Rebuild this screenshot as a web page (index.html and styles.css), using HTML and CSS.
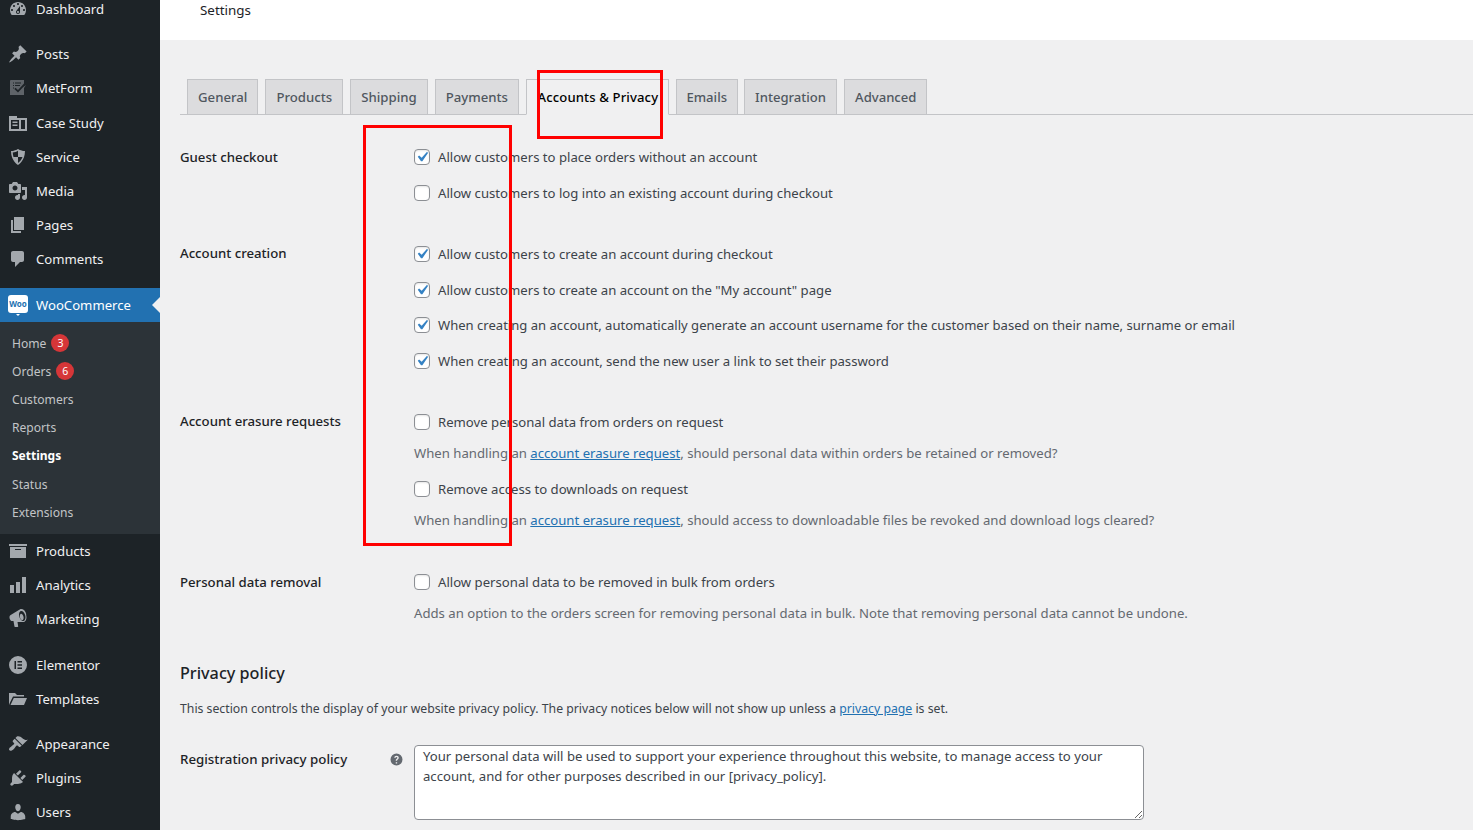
FILE: index.html
```html
<!DOCTYPE html>
<html lang="en">
<head>
<meta charset="utf-8">
<title>Settings</title>
<link rel="stylesheet" href="styles.css">
</head>
<body>
<div class="page">
<nav class="sidebar">
  <div class="group group-first">
    <a class="item"><svg class="ico" viewBox="0 0 20 20"><path d="M3.76 16h12.48c1.1-1.37 1.76-3.11 1.76-5 0-4.42-3.58-8-8-8s-8 3.58-8 8c0 1.89.66 3.63 1.76 5zM10 4c.55 0 1 .45 1 1s-.45 1-1 1-1-.45-1-1 .45-1 1-1zM6 6c.55 0 1 .45 1 1s-.45 1-1 1-1-.45-1-1 .45-1 1-1zm8 0c.55 0 1 .45 1 1s-.45 1-1 1-1-.45-1-1 .45-1 1-1zm-5.37 5.55L12 7v6c0 1.1-.9 2-2 2s-2-.9-2-2c0-.57.24-1.08.63-1.45zM4 10c.55 0 1 .45 1 1s-.45 1-1 1-1-.45-1-1 .45-1 1-1zm12 0c.55 0 1 .45 1 1s-.45 1-1 1-1-.45-1-1 .45-1 1-1zm-5 3c0-.55-.45-1-1-1s-1 .45-1 1 .45 1 1 1 1-.45 1-1z"/></svg>Dashboard</a>
  </div>
  <div class="group group-posts">
    <a class="item"><svg class="ico" viewBox="0 0 20 20"><path d="M10.44 3.02l1.82-1.82 6.36 6.35-1.83 1.82c-1.05-.68-2.48-.57-3.41.36l-.75.75c-.92.93-1.04 2.35-.35 3.41l-1.83 1.82-2.41-2.41-2.8 2.79c-.42.42-3.38 2.71-3.8 2.29s1.86-3.39 2.28-3.81l2.79-2.79L4.1 9.36l1.83-1.82c1.05.69 2.48.57 3.41-.36l.75-.75c.93-.92 1.04-2.35.35-3.41z"/></svg>Posts</a>
    <a class="item"><svg class="ico ico-dim" viewBox="0 0 20 20"><path fill-rule="evenodd" d="M3 2h13v3.500L10 12 7.500 9.800l-1.200 1.200L10 14.500l5-5.200L18 7l-2 3v7H2V3c0-.5.500-1 1-1zM5 4.500v1h1v-1zm2 0v1h6v-1zM5 7v1h1V7zm2 0v1h5V7zM5 9.500v1h1v-1z"/></svg>MetForm</a>
    <a class="item"><svg class="ico" viewBox="0 0 20 20"><path fill-rule="evenodd" d="M1 3h8v2h10v13H1zM3 7v9h8V7zm10 0v9h4V7zM4.500 8.500h5v1.500h-5zm0 3h5v1.500h-5z"/></svg>Case Study</a>
    <a class="item"><svg class="ico" viewBox="0 0 20 20"><path fill-rule="evenodd" d="M10 2s3 2 7 2c0 10-7 14-7 14S3 14 3 4c4 0 7-2 7-2zm0 1.800C8.500 4.800 6.500 5.400 4.700 5.600c.1 1.600.4 3.100.8 4.400H10zM10 10v6c1.500-1 3.500-3 4.500-6H10z"/></svg>Service</a>
    <a class="item"><svg class="ico" viewBox="0 0 20 20"><path d="M13 11V4c0-.55-.45-1-1-1h-1.670L9 1H5L3.670 3H2c-.55 0-1 .45-1 1v7c0 .55.45 1 1 1h10c.55 0 1-.45 1-1zM7 4.500c1.380 0 2.500 1.120 2.500 2.500S8.380 9.500 7 9.500 4.500 8.380 4.500 7 5.620 4.500 7 4.500zM14 6h5v10.500c0 1.380-1.120 2.500-2.500 2.500S14 17.880 14 16.500s1.120-2.500 2.500-2.500c.17 0 .34.02.5.05V9h-3V6zm-4 8.050V13h2v3.500c0 1.380-1.120 2.500-2.500 2.500S7 17.880 7 16.500 8.120 14 9.500 14c.17 0 .34.02.5.05z"/></svg>Media</a>
    <a class="item"><svg class="ico" viewBox="0 0 20 20"><path d="M6 15V2h10v13H6zm-1 1h8v2H3V5h2v11z"/></svg>Pages</a>
    <a class="item"><svg class="ico" viewBox="0 0 20 20"><path d="M5 2h9c1.100 0 2 .9 2 2v7c0 1.100-.9 2-2 2h-2l-5 5v-5H5c-1.100 0-2-.9-2-2V4c0-1.100.9-2 2-2z"/></svg>Comments</a>
  </div>
  <div class="group group-woo">
    <a class="item item-current">
      <span class="woo-logo">Woo</span>WooCommerce
    </a>
    <div class="submenu">
      <a class="sub">Home <span class="badge">3</span></a>
      <a class="sub">Orders <span class="badge">6</span></a>
      <a class="sub">Customers</a>
      <a class="sub">Reports</a>
      <a class="sub sub-active">Settings</a>
      <a class="sub">Status</a>
      <a class="sub">Extensions</a>
    </div>
    <a class="item"><svg class="ico" viewBox="0 0 20 20"><path d="M19 3v2H1V3h18zM2 6h16v11H2V6zm11 3V8H7v1h6z"/></svg>Products</a>
    <a class="item"><svg class="ico" viewBox="0 0 20 20"><path d="M18 18V2h-4v16h4zm-6 0V7H8v11h4zm-6 0v-8H2v8h4z"/></svg>Analytics</a>
    <a class="item"><svg class="ico" viewBox="0 0 20 20"><path d="M18.150 5.940c.46 1.620.38 3.220-.02 4.480-.42 1.280-1.260 2.180-2.300 2.480-.16.06-.26.06-.4.06-.06.02-.12.02-.18.02-.06.02-.14.02-.22.02H9.500l.7 4.500c.02.14-.06.26-.14.34-.08.1-.24.16-.34.16H6.950c-.1 0-.26-.06-.34-.16-.08-.08-.16-.2-.14-.34l-1-5.500H4.250c-.5.06-1.080-.18-1.540-.62s-.88-1.080-1.060-1.880c-.24-.8-.2-1.560-.02-2.200.18-.62.58-1.080 1.060-1.300l9.020-5.420c.1-.06.18-.1.24-.16.06-.04.14-.08.24-.12.16-.08.28-.12.5-.18 1.040-.3 2.240.1 3.220.98.98.86 1.840 2.260 2.260 3.860zm-2.580 5.980c.4-.1.740-.34 1.040-.7.58-.7.860-1.760.860-3.040-.02-.64-.1-1.300-.28-1.980-.34-1.360-1.020-2.500-1.780-3.240s-1.680-1.100-2.460-.88c-.82.22-1.400.96-1.700 2-.32 1.040-.28 2.360.06 3.720.38 1.360 1 2.500 1.800 3.240.78.740 1.620 1.100 2.460.88zm-2.540-7.080c.22-.04.42-.02.62.04.38.16.76.48 1.100 1s.58 1.140.74 1.840c.16.68.16 1.340.08 1.900-.1.54-.34 1.020-.7 1.260-.12.08-.28.12-.44.16-.2.04-.42.02-.62-.04-.38-.16-.76-.48-1.100-1s-.58-1.140-.74-1.840c-.16-.68-.16-1.340-.08-1.900.1-.54.34-1.020.7-1.260.12-.08.28-.14.44-.16z"/></svg>Marketing</a>
  </div>
  <div class="group group-tight">
    <a class="item"><svg class="ico" viewBox="0 0 20 20"><path fill-rule="evenodd" d="M10 1a9 9 0 1 1 0 18 9 9 0 0 1 0-18zM6.500 6v8H8V6zm3 0v1.500H14V6zm0 3.250v1.500H14v-1.500zm0 3.250V14H14v-1.500z"/></svg>Elementor</a>
    <a class="item"><svg class="ico" viewBox="0 0 20 20"><path d="M1 4h6l2 2h7v1.500H5L2 13.500 1 16zM5.800 9H19l-3 7H2.500z"/></svg>Templates</a>
  </div>
  <div class="group">
    <a class="item"><svg class="ico" viewBox="0 0 20 20"><path d="M14.480 11.060L7.410 3.990l1.500-1.500c.5-.56 2.300-.47 3.510.32 1.210.8 1.430 1.280 2.910 2.100 1.180.64 2.450 1.260 4.450.85zm-.71.71L6.700 4.700 4.930 6.470c-.39.39-.39 1.020 0 1.410l1.060 1.060c.39.39.39 1.030 0 1.420-.6.6-1.430 1.110-2.210 1.690-.35.26-.7.53-1.010.84C1.430 13.230.4 15.330 1.400 16.300c.98 1 3.090-.03 4.430-1.370.31-.31.58-.66.85-1.020.57-.78 1.080-1.600 1.690-2.210.39-.39 1.020-.39 1.410 0l1.060 1.060c.39.39 1.020.39 1.410 0z"/></svg>Appearance</a>
    <a class="item"><svg class="ico" viewBox="0 0 20 20"><path d="M13.110 4.360L9.870 7.600 8 5.730l3.240-3.240c.35-.34 1.050-.2 1.560.32.52.51.66 1.210.31 1.550zm-8 1.770l.91-1.120 9.010 9.010-1.190.84c-.71.71-2.630 1.160-3.820 1.160H6.140L4.900 17.260c-.59.59-1.540.59-2.120 0-.59-.58-.59-1.530 0-2.120l1.240-1.240v-3.880c0-1.130.4-3.190 1.090-3.890zm7.260 3.970l3.240-3.240c.34-.35 1.040-.21 1.550.31.52.51.66 1.210.31 1.550l-3.240 3.250z"/></svg>Plugins</a>
    <a class="item"><svg class="ico" viewBox="0 0 20 20"><path d="M10 9.250c-2.270 0-2.730-3.440-2.730-3.440C7 4.020 7.820 2 9.970 2c2.160 0 2.980 2.020 2.710 3.810 0 0-.41 3.440-2.680 3.440zm0 2.570L12.720 10c2.390 0 4.520 2.330 4.520 4.530v2.490s-3.650 1.130-7.240 1.130c-3.650 0-7.240-1.130-7.240-1.130v-2.490c0-2.250 1.940-4.480 4.470-4.480z"/></svg>Users</a>
  </div>
</nav>
<main class="main">
  <header class="topbar"><span>Settings</span></header>
  <div class="wrap">
    <div class="tabs">
      <a class="tab">General</a>
      <a class="tab">Products</a>
      <a class="tab">Shipping</a>
      <a class="tab">Payments</a>
      <a class="tab tab-active">Accounts &amp; Privacy</a>
      <a class="tab">Emails</a>
      <a class="tab">Integration</a>
      <a class="tab">Advanced</a>
    </div>
    <div class="form">
      <section class="row">
        <div class="label">Guest checkout</div>
        <div class="field">
          <label class="opt"><span class="cb"><svg class="tick" viewBox="0 0 20 20"><path d="M14.830 4.890l1.340.94-5.810 8.380H9.020L5.780 9.670l1.340-1.250 2.570 2.400z"/></svg></span>Allow customers to place orders without an account</label>
          <label class="opt"><span class="cb"></span>Allow customers to log into an existing account during checkout</label>
        </div>
      </section>
      <section class="row row-creation">
        <div class="label">Account creation</div>
        <div class="field">
          <label class="opt"><span class="cb"><svg class="tick" viewBox="0 0 20 20"><path d="M14.830 4.890l1.340.94-5.810 8.380H9.020L5.780 9.670l1.340-1.250 2.570 2.400z"/></svg></span>Allow customers to create an account during checkout</label>
          <label class="opt"><span class="cb"><svg class="tick" viewBox="0 0 20 20"><path d="M14.830 4.890l1.340.94-5.810 8.380H9.020L5.780 9.670l1.340-1.250 2.570 2.400z"/></svg></span>Allow customers to create an account on the "My account" page</label>
          <label class="opt opt-long"><span class="cb"><svg class="tick" viewBox="0 0 20 20"><path d="M14.830 4.890l1.340.94-5.810 8.380H9.020L5.780 9.670l1.340-1.250 2.570 2.400z"/></svg></span>When creating an account, automatically generate an account username for the customer based on their name, surname or email</label>
          <label class="opt"><span class="cb"><svg class="tick" viewBox="0 0 20 20"><path d="M14.830 4.890l1.340.94-5.810 8.380H9.020L5.780 9.670l1.340-1.250 2.570 2.400z"/></svg></span>When creating an account, send the new user a link to set their password</label>
        </div>
      </section>
      <section class="row row-erasure">
        <div class="label">Account erasure requests</div>
        <div class="field">
          <label class="opt"><span class="cb"></span>Remove personal data from orders on request</label>
          <p class="desc">When handling an <a class="link">account erasure request</a>, should personal data within orders be retained or removed?</p>
          <label class="opt"><span class="cb"></span>Remove access to downloads on request</label>
          <p class="desc">When handling an <a class="link">account erasure request</a>, should access to downloadable files be revoked and download logs cleared?</p>
        </div>
      </section>
      <section class="row">
        <div class="label">Personal data removal</div>
        <div class="field">
          <label class="opt"><span class="cb"></span>Allow personal data to be removed in bulk from orders</label>
          <p class="desc">Adds an option to the orders screen for removing personal data in bulk. Note that removing personal data cannot be undone.</p>
        </div>
      </section>
    </div>
    <h2 class="title">Privacy policy</h2>
    <p class="intro">This section controls the display of your website privacy policy. The privacy notices below will not show up unless a <a class="link">privacy page</a> is set.</p>
    <section class="row row-policy">
      <div class="label label-help">Registration privacy policy<svg class="help" viewBox="0 0 20 20"><path d="M10 2a8 8 0 1 1 0 16 8 8 0 0 1 0-16zm.9 11.500H9V15.300h1.900zM10.100 5C8.400 5 7.100 6 7 7.700h1.800c.1-.7.6-1.100 1.300-1.100.7 0 1.100.4 1.100 1 0 .5-.3.9-.9 1.300-.9.6-1.300 1.200-1.300 2.200v.5h1.800v-.4c0-.5.2-.8.9-1.300.9-.6 1.300-1.300 1.300-2.200C13 6 11.800 5 10.100 5z"/></svg></div>
      <div class="field">
        <textarea class="area" readonly>Your personal data will be used to support your experience throughout this website, to manage access to your account, and for other purposes described in our [privacy_policy].</textarea>
      </div>
    </section>
  </div>
</main>
</div>
<div class="mark mark-tab"></div>
<div class="mark mark-col"></div>
</body>
</html>
```
FILE: styles.css
```css
* { box-sizing: border-box; }
html, body { margin: 0; height: 100%; overflow: hidden; }
body { background: #f0f0f1; font-family: "Noto Sans", "Open Sans", sans-serif; font-size: 13.150px; color: #3c434a; }
.page { display: flex; height: 830px; overflow: hidden; }

.sidebar { width: 160px; flex: none; background: #1d2327; color: #f0f0f1; }
.group { margin-bottom: 11.500px; }
.group-first { margin-top: -8px; margin-bottom: 11.200px; height: 34px; }
.group-posts { margin-bottom: 11.300px; }
.group-tight { margin-bottom: 10.500px; }
.item { display: flex; align-items: center; height: 34.200px; font-size: 13.150px; color: #f0f0f1; position: relative; }
.ico { width: 20px; height: 20px; margin: 0 8px; fill: #a3a8ad; flex: none; }
.ico-dim { fill: #5f6469; }
.item-current { background: #2271b1; color: #fff; }
.item-current::after { content: ""; position: absolute; right: 0; top: 50%; margin-top: -8px; border: 8px solid transparent; border-right-color: #f0f0f1; border-left-width: 0; }
.woo-logo { width: 20px; height: 18px; margin: -2px 8px 0; background: #fff; color: #2271b1; border-radius: 3px; font-size: 8px; font-weight: 700; line-height: 18px; text-align: center; flex: none; position: relative; }
.woo-logo::after { content: ""; position: absolute; left: 8px; bottom: -3px; border: 2px solid transparent; border-top-color: #fff; border-bottom-width: 0; }
.submenu { background: #2c3338; height: 212px; padding: 7px 0 0; }
.sub { display: flex; align-items: center; gap: 5px; height: 28.200px; padding-left: 12px; font-size: 12.100px; color: #c3c5c7; }
.sub-active { color: #fff; font-weight: 700; font-size: 12px; }
.badge { width: 18px; height: 18px; border-radius: 50%; background: #d63638; color: #fff; font-size: 10.500px; display: flex; align-items: center; justify-content: center; }

.main { flex: 1; min-width: 0; }
.topbar { height: 40px; background: #fff; padding: 0 40px; display: flex; align-items: flex-start; }
.topbar span { font-size: 13.400px; color: #1d2327; line-height: 20px; }
.wrap { padding: 39px 0 0 20px; }
.tabs { display: flex; gap: 7px; height: 36px; border-bottom: 1px solid #c3c4c7; padding-left: 7px; }
.tab { height: 36px; padding: 0 10px; background: #dcdcde; border: 1px solid #c3c4c7; color: #50575e; font-size: 13.200px; font-weight: 500; line-height: 34px; white-space: nowrap; }
.tab-active { background: #f0f0f1; border-bottom-color: #f0f0f1; color: #000; padding: 0 9.500px 0 10.500px; font-size: 13.100px; letter-spacing: .12px; }
.tab-active ~ .tab { font-size: 13.100px; }
.tab-active + .tab { padding: 0 9.750px; margin-right: -.75px; }

.form { padding-top: 24px; display: flex; flex-direction: column; gap: 25.500px; }
.row { display: flex; }
.row-creation { margin-bottom: -.25px; }
.row-erasure { margin-bottom: .75px; }
.row-creation .label, .row-erasure .label { margin-top: -1px; }
.label { width: 234px; flex: none; height: 36px; line-height: 36px; color: #1d2327; font-weight: 500; font-size: 13.200px; }
.field { flex: 1; min-width: 0; }
.opt { display: flex; align-items: center; height: 35.750px; white-space: nowrap; }
.opt-long { font-size: 13.070px; }
.cb { width: 16px; height: 16px; margin-right: 8px; border: 1px solid #8c8f94; border-radius: 4px; background: #fff; box-shadow: inset 0 1px 2px rgba(0,0,0,.1); flex: none; position: relative; }
.tick { position: absolute; left: -3px; top: -3px; width: 20px; height: 20px; fill: #3582c4; }
.desc { margin: 3px 0 8px; height: 20px; line-height: 20px; white-space: nowrap; color: #646970; }
.link { color: #2271b1; text-decoration: underline; }

.title { margin: 30.250px 0 0; font-size: 16.200px; line-height: 24px; font-weight: 500; color: #1d2327; }
.intro { margin: 14px 0 0; font-size: 12.250px; line-height: 20px; white-space: nowrap; }
.row-policy { margin-top: 26px; }
.label-help { position: relative; height: 28px; line-height: 28px; font-size: 13.300px; }
.help { position: absolute; left: 209px; top: 7px; width: 15px; height: 15px; fill: #646970; }
.area { display: block; width: 730px; height: 75px; padding: 0 8px; border: 1px solid #8c8f94; border-radius: 4px; background: #fff; color: #3c434a; font: 13.130px/20px "Noto Sans", "Open Sans", sans-serif; outline: 0; }

.mark { position: absolute; border: 3px solid #f00; pointer-events: none; }
.mark-tab { left: 537px; top: 70px; width: 126px; height: 69px; }
.mark-col { left: 363px; top: 125px; width: 149px; height: 421px; }
```
